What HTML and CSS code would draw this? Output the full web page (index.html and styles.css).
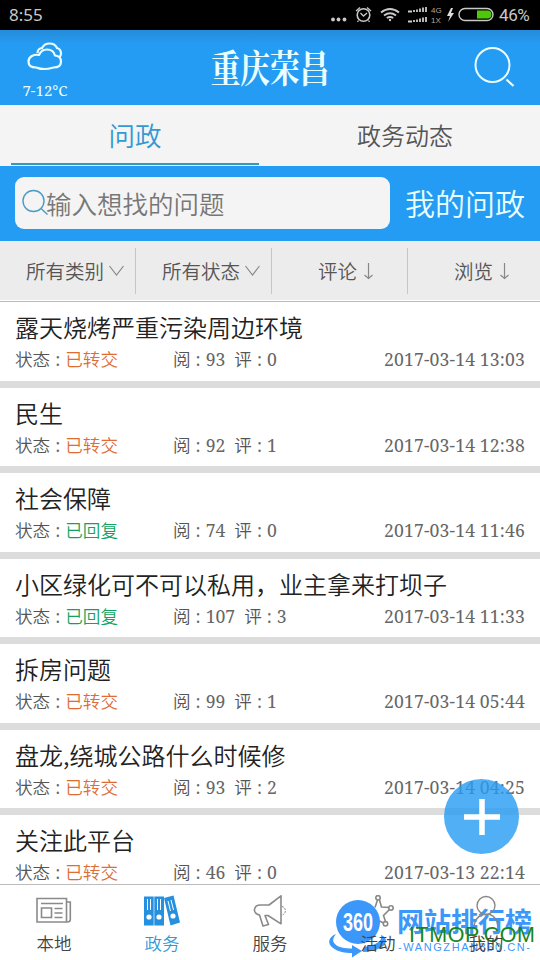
FILE: index.html
```html
<!DOCTYPE html>
<html lang="zh-CN">
<head>
<meta charset="utf-8">
<title>重庆荣昌</title>
<link rel="stylesheet" href="styles.css">
</head>
<body>
<div class="app">
  <div class="status">
    <span class="clock">8:55</span>
    <svg class="sysicons" width="165" height="30" viewBox="330 0 165 30" fill="none" stroke="#c9c9c9">
      <g fill="#c9c9c9" stroke="none"><circle cx="333" cy="19.500" r="1.900"/><circle cx="338.500" cy="19.500" r="1.900"/><circle cx="344.500" cy="19.500" r="1.900"/></g>
      <circle cx="363.500" cy="15" r="6.300" stroke-width="1.600"/>
      <path d="M360.500 13l3 3 3.500-3M356 11l4-3.500M371 11l-4-3.500M358.500 20.500l-1 1.500M368.500 20.500l1 1.500" stroke-width="1.300"/>
      <path d="M381 12.500q9-7 18 0M384 15.500q6-4.500 12 0M386.800 18q3.200-2.200 6.400 0" stroke-width="2"/>
      <circle cx="390" cy="20" r="1.200" fill="#c9c9c9" stroke="none"/>
      <path d="M408 11.500h4M414 12v-2M417 12v-2.500M420 12V8.500M423 12V7.500M426 12V7M408 21.500h4M414 22v-2M417 22v-2.500M420 22v-3.500M423 22v-4.500M426 22v-5" stroke-width="1.800"/>
      <text class="nettype" x="431" y="13">4G</text><text class="nettype" x="431" y="22.500">1X</text>
      <path d="M451 8l-4 8h3l-2 6 6-9h-3l2-5z" fill="#ddd" stroke="none"/>
      <rect x="459" y="8.500" width="34" height="12" rx="6" stroke-width="1.400"/>
      <path d="M477 10.500h10.500a4 4 0 0 1 0 8H477z" fill="#50c80a" stroke="none"/>
    </svg>
    <span class="percent">46%</span>
  </div>

  <header class="header">
    <div class="weather">
      <svg width="36" height="29" viewBox="0 0 36 29" fill="none" stroke="#eaffff" stroke-width="2.200" stroke-linejoin="round">
        <path d="M9 25.500c1.500 0 2 1.500 8.500 1.500s7-1.500 9-1.500c4.500 0 7.500-2 7.500-6 0-3.500-2-5.500-6-6-1-4-4-6-8-6s-6.500 2-8 5.500c-5-1-10.500 1.500-10.500 6.500 0 4 3 6 7.500 6z"/>
        <path d="M10.500 11c0-3 2-4.800 4.500-4.800C16.500 3 19.500 1.500 22.500 1.500c4.500 0 6.500 2 7.500 4.500 3 .8 4 3 4 5.500 0 2-.8 3-1.700 3.700"/>
      </svg>
      <span class="temp">7-12°C</span>
    </div>
    <h1 class="brand"><span>重庆荣昌</span></h1>
    <svg class="search" width="42" height="42" viewBox="0 0 42 42" fill="none" stroke="#eaffff"><circle cx="18.500" cy="19" r="17" stroke-width="2"/><path d="M32.500 33.500l7 6.500" stroke-width="2.200"/></svg>
  </header>

  <nav class="tabs"><div class="tab on">问政</div><div class="tab">政务动态</div></nav>

  <div class="searchbar">
    <div class="field">
      <svg width="26" height="27" viewBox="0 0 26 27" fill="none" stroke="#4a9bc8" stroke-width="1.400"><circle cx="11.500" cy="12" r="10.500"/><path d="M19 19.500l6.500 6"/></svg>
      <span>输入想找的问题</span>
    </div>
    <span class="mine">我的问政</span>
  </div>

  <div class="filters">
    <div class="filter"><span>所有类别</span><svg width="15" height="12" viewBox="0 0 15 12"><path d="M.5 1l7 9 7-9"/></svg></div>
    <div class="filter"><span>所有状态</span><svg width="15" height="12" viewBox="0 0 15 12"><path d="M.5 1l7 9 7-9"/></svg></div>
    <div class="filter sort"><span>评论</span><svg width="9" height="17" viewBox="0 0 9 17"><path d="M4.500 0v15.500M.5 12l4 3.500 4-3.500"/></svg></div>
    <div class="filter sort"><span>浏览</span><svg width="9" height="17" viewBox="0 0 9 17"><path d="M4.500 0v15.500M.5 12l4 3.500 4-3.500"/></svg></div>
  </div>

  <main class="list">
    <article class="row"><h2>露天烧烤严重污染周边环境</h2><div class="meta"><span class="state">状态<i>:</i><b>已转交</b></span><span class="counts"><span>阅<i>:</i><em>93</em></span><span>评<i>:</i><em>0</em></span></span><time>2017-03-14 13:03</time></div></article>
    <article class="row"><h2>民生</h2><div class="meta"><span class="state">状态<i>:</i><b>已转交</b></span><span class="counts"><span>阅<i>:</i><em>92</em></span><span>评<i>:</i><em>1</em></span></span><time>2017-03-14 12:38</time></div></article>
    <article class="row"><h2>社会保障</h2><div class="meta"><span class="state">状态<i>:</i><b class="done">已回复</b></span><span class="counts"><span>阅<i>:</i><em>74</em></span><span>评<i>:</i><em>0</em></span></span><time>2017-03-14 11:46</time></div></article>
    <article class="row"><h2>小区绿化可不可以私用，业主拿来打坝子</h2><div class="meta"><span class="state">状态<i>:</i><b class="done">已回复</b></span><span class="counts"><span>阅<i>:</i><em>107</em></span><span>评<i>:</i><em>3</em></span></span><time>2017-03-14 11:33</time></div></article>
    <article class="row"><h2>拆房问题</h2><div class="meta"><span class="state">状态<i>:</i><b>已转交</b></span><span class="counts"><span>阅<i>:</i><em>99</em></span><span>评<i>:</i><em>1</em></span></span><time>2017-03-14 05:44</time></div></article>
    <article class="row"><h2>盘龙,绕城公路什么时候修</h2><div class="meta"><span class="state">状态<i>:</i><b>已转交</b></span><span class="counts"><span>阅<i>:</i><em>93</em></span><span>评<i>:</i><em>2</em></span></span><time>2017-03-14 04:25</time></div></article>
    <article class="row"><h2>关注此平台</h2><div class="meta"><span class="state">状态<i>:</i><b>已转交</b></span><span class="counts"><span>阅<i>:</i><em>46</em></span><span>评<i>:</i><em>0</em></span></span><time>2017-03-13 22:14</time></div></article>
  </main>

  <div class="add"><svg width="36" height="36" viewBox="0 0 36 36"><path d="M18 0v36M0 18h36" stroke="#fff" stroke-width="5.500"/></svg></div>

  <footer class="bottom">
    <div class="item"><svg width="36" height="32" viewBox="0 0 36 32" fill="none" stroke="#8a8a8a" stroke-width="1.600"><path d="M1 3.500h29.500v23.500H1zM30.500 7h3.800v17.500q0 2.500-3 2.500h-3M5 8.500h22M5.500 13h10v9.500h-10zM18.500 13.500h8M18.500 18h8M18.500 22.500h8"/></svg><span>本地</span></div>
    <div class="item on"><svg width="36" height="32" viewBox="0 0 36 32"><path d="M0 1.500h9.700v29H0zM10.300 1.500H20v29h-9.700zM20 3l9.500-2.500 6.500 27-9.500 3z" fill="#2590e0"/><g stroke="#fff" stroke-width="1"><path d="M3.500 4v11M6.500 4v11M13.500 4v11M16.500 4v11M24 6l2.500 10M27 5l2.500 10"/></g><g fill="#fff"><circle cx="5" cy="22" r="2.600"/><circle cx="15" cy="22" r="2.600"/><circle cx="29" cy="21" r="2.600"/></g></svg><span>政务</span></div>
    <div class="item"><svg width="36" height="32" viewBox="0 0 36 32" fill="none" stroke="#8a8a8a" stroke-width="1.600" stroke-linejoin="round"><path d="M29 .8v28L16 20.500h-3l3.500 9-5.500 1.500-3.500-11C4 19 2 17.500 2.500 14.500c.5-3.500 2.500-4.500 5.500-4.500h9z"/><path d="M30 11.500c4.500 1 4.500 7.500 0 8.500" stroke-width="1" stroke-dasharray="2 1"/></svg><span>服务</span></div>
    <div class="item"><svg width="36" height="32" viewBox="0 0 36 32" fill="none" stroke="#888" stroke-width="1.600"><path d="M15 12.500l2.500-7.500M19.500 5l2 7 7.500.500M29.500 14.500l-6 6 2 6M23.500 28l-4-2"/><circle cx="18" cy="2.800" r="2.200"/><circle cx="31" cy="13" r="2.200"/><circle cx="25.500" cy="28.800" r="2.200"/></svg><span>活动</span></div>
    <div class="item"><svg width="36" height="32" viewBox="0 0 36 32" fill="none" stroke="#888" stroke-width="1.400"><circle cx="18" cy="10.500" r="9"/><path d="M6 31c1-7 5-10 8-11.500h8c4 1.500 7 4.500 8 11.500"/></svg><span>我的</span></div>
    <svg class="mark" width="220" height="75" viewBox="320 885 220 75">
      <path d="M336 934c-8 3-9 10-3 14 5 4 12 5 19 5v4.500l10-6.500-10-6v3.500c-7 0-14-1-17-4.500-3-3-2-6 1-10z" fill="#3b98fa"/>
      <path d="M363 952c12-.5 23-5 23-11 0-3-2-5-5-6 2 6-5 10-17 12z" fill="#3b98fa"/>
      <circle cx="358" cy="922" r="22" fill="#3b98fa"/>
      <text class="m360" x="343" y="931" textLength="30" lengthAdjust="spacingAndGlyphs">360</text>
      <text class="mname" x="397" y="932" textLength="135">网站排行榜</text>
      <text class="murl" x="398" y="950.500" textLength="132">-WANGZHAN360.CN-</text>
      <text class="mtop" x="409" y="942" textLength="126">ITMOP.COM</text>
    </svg>
  </footer>
</div>
</body>
</html>
```

FILE: styles.css
```css
* { box-sizing: border-box; }
body { margin: 0; background: #fff; }
.app {
  position: relative; width: 540px; height: 960px; overflow: hidden;
  display: flex; flex-direction: column;
  font-family: "Noto Sans CJK SC", sans-serif; font-weight: 350; color: #555;
}
svg { display: block; flex: none; }
.status {
  height: 30px; flex: none; background: #000; color: #c9c9c9; padding: 0 10px 0 9px;
  display: flex; align-items: center; font: 17px/30px "Noto Sans", sans-serif;
}
.sysicons { margin-left: auto; margin-right: 4px; }
.percent { font: 17px/30px Roboto, sans-serif; width: 31px; letter-spacing: -.4px; }
.nettype { font: 8px "Liberation Sans", sans-serif; fill: #aaa; stroke: none; }
.header {
  height: 75px; flex: none; padding: 0 24px 0 15px; color: #eaffff;
  background: linear-gradient(#258bd9, #259cf3 14px);
  display: grid; grid-template-columns: 60px 1fr 42px; align-items: start;
}
.weather { display: flex; flex-direction: column; align-items: center; padding-top: 12px; }
.temp { font: 15px/20px "Noto Serif", "Liberation Serif", serif; margin-top: 9px; white-space: nowrap; }
.brand {
  margin: 11px 0 0; text-align: center; white-space: nowrap;
  font: 700 38px/50px "Noto Serif CJK SC", "Noto Sans CJK SC", serif;
}
.brand span { display: inline-block; transform: scaleX(.78); margin-left: -9px; }
.search { margin-top: 16px; }
.tabs { height: 61px; flex: none; background: #f4f4f4; display: flex; padding: 0 11px; justify-content: space-between; }
.tab { width: 248px; text-align: center; font-size: 24px; line-height: 60px; color: #555; border-bottom: 2px solid transparent; height: 60px; }
.tab.on { font-size: 26.500px; line-height: 59px; color: #3399d3; border-color: #3499c0; }
.searchbar {
  height: 75px; flex: none; background: #259cf3; display: flex; align-items: center; padding: 0 15px 2px; gap: 15px;
}
.field {
  width: 375px; height: 52px; border-radius: 9px; background: #f4f4f4; display: flex; align-items: center;
  padding-left: 7px; font-size: 25.500px; color: #777; white-space: nowrap;
}
.field span { margin-left: -2px; margin-top: -1px; }
.mine { font-size: 30px; color: #eaffff; white-space: nowrap; margin-top: -1px; }
.filters {
  height: 61px; flex: none; background: #ececec; border-bottom: 1px solid #bbb; box-shadow: inset 0 -1px #fff;
  display: grid; grid-template-columns: repeat(4, 136px); padding-top: 7px;
}
.filter {
  height: 46px; border-right: 1px solid #c6c6c6; display: flex; align-items: center; justify-content: flex-end;
  gap: 5px; padding-right: 11px; font-size: 19.500px; color: #555;
}
.filter span { margin-top: -2px; }
.filter.sort { gap: 7px; padding-right: 34px; }
.filter svg { fill: none; stroke: #888; stroke-width: 1.2; }
.list { height: 582px; flex: none; overflow: hidden; background: #fff; }
.row { height: 85.500px; border-bottom: 7.500px solid #dcdcdc; padding: 6px 15px 0; }
.row h2 { margin: 0; font-size: 24px; line-height: 37px; height: 38px; font-weight: 350; color: #222; white-space: nowrap; }
.meta { display: grid; grid-template-columns: 158px 1fr auto; font-size: 17.600px; line-height: 26px; white-space: nowrap; }
.meta i, .meta em, .meta time { font-style: normal; font-family: "Noto Serif", "Liberation Serif", serif; font-weight: 400; color: #666; }
.meta i { margin: 0 5px; }
.meta b { font-weight: 350; color: #dd6d35; }
.meta b.done { color: #10a45e; }
.meta em { font-size: 17.600px; }
.counts { display: flex; gap: 9px; }
.meta time { font-size: 17.600px; letter-spacing: .15px; }
.add {
  position: absolute; left: 444px; top: 779px; width: 75px; height: 75px; border-radius: 50%;
  background: rgba(37, 156, 243, .8); display: flex; align-items: center; justify-content: center;
}
.bottom {
  height: 76px; flex: none; border-top: 1px solid #bbb; position: relative; background: #fff;
  display: grid; grid-template-columns: repeat(5, 108px);
}
.item { position: relative; z-index: 1; display: flex; flex-direction: column; align-items: center; padding-top: 10px; }
.item span { font-size: 17.500px; line-height: 28px; margin-top: 2px; color: #444; }
.item.on span { color: #3399d3; }
.mark { position: absolute; right: 0; top: 0; }
.m360 { font: 700 26px "Liberation Sans", sans-serif; fill: #fff; }
.mname { font: 700 27px "Noto Sans CJK SC", sans-serif; fill: #3b98fa; }
.murl { font: 11px "Liberation Sans", sans-serif; fill: #3b98fa; }
.mtop { font: 21.500px "Liberation Sans", sans-serif; fill: #188618; }
```
